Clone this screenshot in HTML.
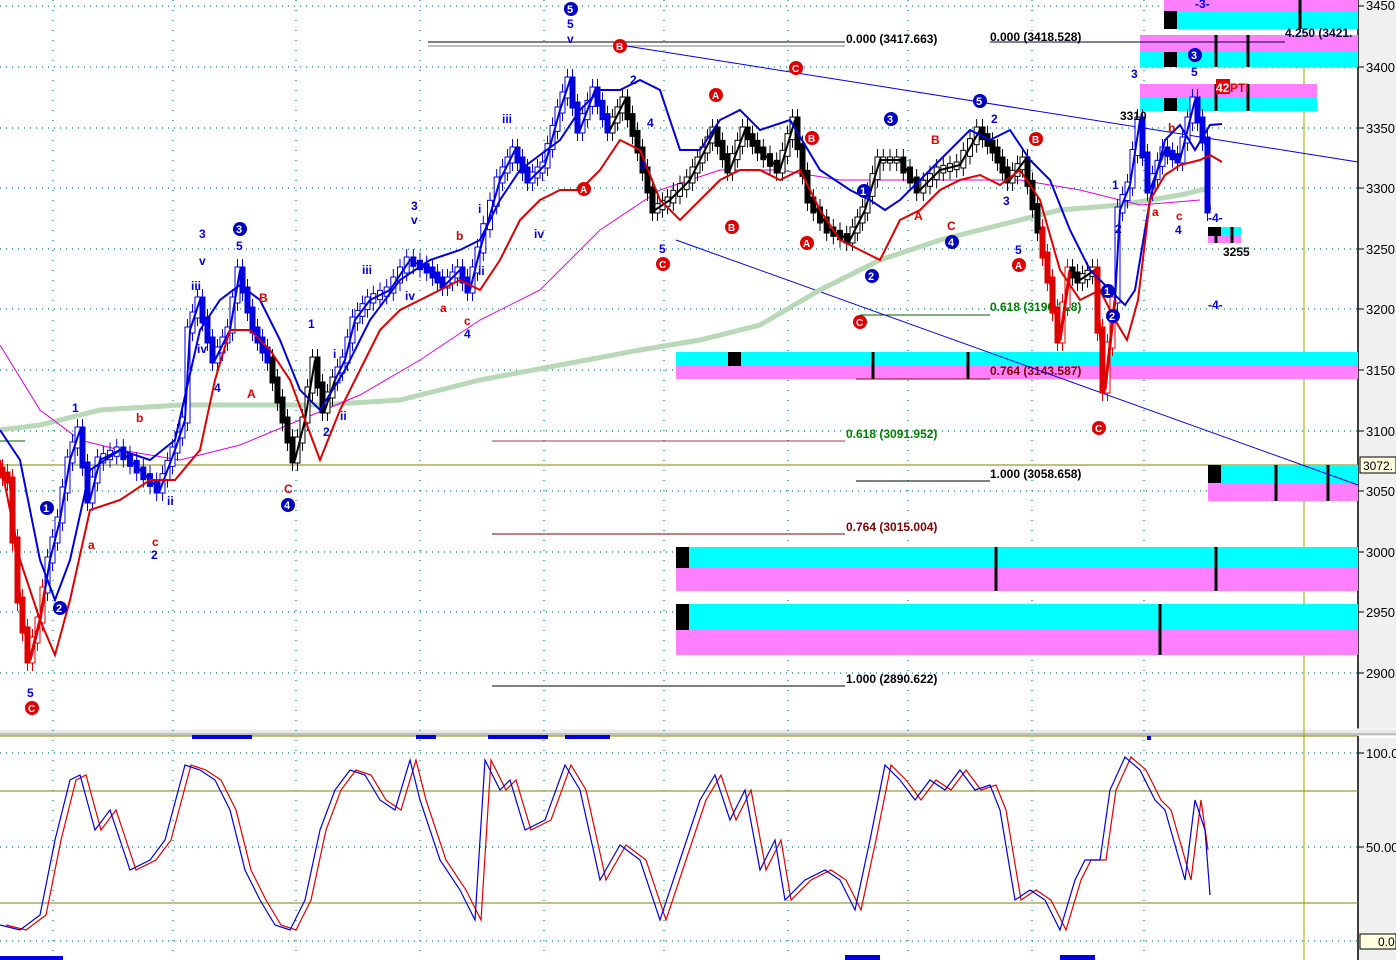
<!DOCTYPE html>
<html><head><meta charset="utf-8"><style>
html,body{margin:0;padding:0;background:#fff;}
svg{display:block;font-family:"Liberation Sans",sans-serif;}
.fib{font-size:12px;font-weight:bold;}
.ax{font-size:13px;font-family:"Liberation Sans",sans-serif;}
.wb{fill:#0000e0;font-size:12px;font-weight:bold;}
.wr{fill:#e00000;font-size:12px;font-weight:bold;}
</style></head><body>
<svg id="s" width="1396" height="960" viewBox="0 0 1396 960" xmlns="http://www.w3.org/2000/svg">
<rect width="1396" height="960" fill="#fff"/>
<rect x="1358" y="0" width="38" height="730" fill="#f0f0f0"/>
<rect x="1358" y="738" width="38" height="222" fill="#f0f0f0"/>
<line x1="1358" y1="0" x2="1358" y2="960" stroke="#000" stroke-width="1.5"/>
<rect x="0" y="729" width="1396" height="7" fill="#e8e8e8"/>
<line x1="0" y1="729" x2="1396" y2="729" stroke="#fff"/>
<line x1="0" y1="734" x2="1396" y2="734" stroke="#999"/>
<line x1="0" y1="736" x2="1358" y2="736" stroke="#808000"/>
<g stroke="#008080" stroke-dasharray="1,5" stroke-width="1.2">
<line x1="0" y1="6" x2="1358" y2="6"/><line x1="0" y1="67" x2="1358" y2="67"/><line x1="0" y1="128" x2="1358" y2="128"/>
<line x1="0" y1="188" x2="1358" y2="188"/><line x1="0" y1="249" x2="1358" y2="249"/><line x1="0" y1="309" x2="1358" y2="309"/>
<line x1="0" y1="370" x2="1358" y2="370"/><line x1="0" y1="431" x2="1358" y2="431"/><line x1="0" y1="491" x2="1358" y2="491"/>
<line x1="0" y1="552" x2="1358" y2="552"/><line x1="0" y1="612" x2="1358" y2="612"/><line x1="0" y1="673" x2="1358" y2="673"/>
<line x1="0" y1="753" x2="1358" y2="753"/><line x1="0" y1="847" x2="1358" y2="847"/><line x1="0" y1="941" x2="1358" y2="941"/>
</g>
<g stroke="#008080" stroke-dasharray="1,9" stroke-width="1.2">
<line x1="53" y1="0" x2="53" y2="960"/><line x1="173" y1="0" x2="173" y2="960"/><line x1="296" y1="0" x2="296" y2="960"/>
<line x1="420" y1="0" x2="420" y2="960"/><line x1="544" y1="0" x2="544" y2="960"/><line x1="664" y1="0" x2="664" y2="960"/>
<line x1="788" y1="0" x2="788" y2="960"/><line x1="908" y1="0" x2="908" y2="960"/><line x1="1032" y1="0" x2="1032" y2="960"/>
<line x1="1144" y1="0" x2="1144" y2="960"/>
</g>
<line x1="0" y1="465" x2="1358" y2="465" stroke="#808000"/>
<line x1="0" y1="791" x2="1358" y2="791" stroke="#808000"/>
<line x1="0" y1="903" x2="1358" y2="903" stroke="#808000"/>
<line x1="1304" y1="0" x2="1304" y2="960" stroke="#a0a000"/>
<g>
<rect x="676" y="352" width="682" height="14" fill="#00ffff"/><rect x="676" y="366" width="682" height="13" fill="#ff80ff"/>
<rect x="728" y="352" width="13" height="14" fill="#000"/>
<rect x="1208" y="465" width="150" height="18" fill="#00ffff"/><rect x="1208" y="483" width="150" height="18" fill="#ff80ff"/>
<rect x="1208" y="465" width="13" height="18" fill="#000"/>
<rect x="676" y="547" width="682" height="21" fill="#00ffff"/><rect x="676" y="568" width="682" height="23" fill="#ff80ff"/>
<rect x="676" y="547" width="13" height="21" fill="#000"/>
<rect x="676" y="604" width="682" height="26" fill="#00ffff"/><rect x="676" y="630" width="682" height="25" fill="#ff80ff"/>
<rect x="676" y="604" width="13" height="26" fill="#000"/>
<rect x="1164" y="0" width="194" height="11" fill="#ff80ff"/><rect x="1164" y="11" width="194" height="18" fill="#00ffff"/>
<rect x="1164" y="11" width="13" height="18" fill="#000"/>
<rect x="1140" y="35" width="218" height="17" fill="#ff80ff"/><rect x="1140" y="52" width="218" height="15" fill="#00ffff"/>
<rect x="1164" y="52" width="13" height="15" fill="#000"/>
<rect x="1140" y="84" width="177" height="14" fill="#ff80ff"/><rect x="1140" y="98" width="177" height="13" fill="#00ffff"/>
<rect x="1164" y="98" width="13" height="13" fill="#000"/>
<rect x="1208" y="227" width="33" height="9" fill="#00ffff"/><rect x="1208" y="236" width="33" height="7" fill="#ff80ff"/>
<rect x="1208" y="227" width="13" height="9" fill="#000"/>
<g stroke="#000" stroke-width="3">
<line x1="873" y1="352" x2="873" y2="379"/><line x1="968" y1="352" x2="968" y2="379"/>
<line x1="1276" y1="465" x2="1276" y2="501"/><line x1="1328" y1="465" x2="1328" y2="501"/>
<line x1="996" y1="547" x2="996" y2="591"/><line x1="1216" y1="547" x2="1216" y2="591"/>
<line x1="1160" y1="604" x2="1160" y2="655"/><line x1="1300" y1="0" x2="1300" y2="29"/>
<line x1="1216" y1="35" x2="1216" y2="67"/><line x1="1248" y1="35" x2="1248" y2="67"/>
<line x1="1216" y1="84" x2="1216" y2="111"/><line x1="1248" y1="84" x2="1248" y2="111"/>
<line x1="1216" y1="227" x2="1216" y2="243"/><line x1="1232" y1="227" x2="1232" y2="243"/>
</g>
</g>
<line x1="428" y1="42" x2="845" y2="42" stroke="#000"/>
<line x1="428" y1="46" x2="845" y2="46" stroke="#000" stroke-width="0.6"/>
<line x1="990" y1="42" x2="1285" y2="42" stroke="#000040"/>
<line x1="860" y1="315" x2="990" y2="315" stroke="#006000"/>
<line x1="856" y1="379" x2="990" y2="379" stroke="#800000"/>
<line x1="492" y1="441" x2="845" y2="441" stroke="#800000" stroke-width="0.7"/>
<line x1="0" y1="441" x2="25" y2="441" stroke="#006000"/>
<line x1="856" y1="481" x2="990" y2="481" stroke="#000"/>
<line x1="492" y1="534" x2="845" y2="534" stroke="#800000"/>
<line x1="492" y1="686" x2="845" y2="686" stroke="#000"/>
<text x="846" y="43" class="fib" fill="#000">0.000 (3417.663)</text>
<text x="990" y="41" class="fib" fill="#000">0.000 (3418.528)</text>
<text x="1285" y="37" class="fib" fill="#000040">4.250 (3421.</text>
<text x="990" y="311" class="fib" fill="#008000">0.618 (3196.128)</text>
<text x="990" y="375" class="fib" fill="#800000">0.764 (3143.587)</text>
<text x="846" y="438" class="fib" fill="#008000">0.618 (3091.952)</text>
<text x="990" y="478" class="fib" fill="#000">1.000 (3058.658)</text>
<text x="846" y="531" class="fib" fill="#800000">0.764 (3015.004)</text>
<text x="846" y="683" class="fib" fill="#000">1.000 (2890.622)</text>
<line x1="620" y1="45" x2="1358" y2="162" stroke="#0000e0"/>
<line x1="676" y1="240" x2="1358" y2="485" stroke="#0000e0"/>
<polyline fill="none" stroke="#b8d8b8" stroke-width="5" points="0,430 40,425 100,410 180,405 250,405 320,405 400,400 480,380 560,365 640,350 700,340 760,325 820,290 880,260 940,240 1000,225 1060,210 1120,205 1180,195 1210,188"/>
<polyline fill="none" stroke="#e000e0" stroke-width="1" points="0,345 40,410 80,440 120,450 180,460 240,445 300,420 360,395 420,360 480,320 540,290 600,230 660,190 720,170 780,170 840,180 900,180 960,180 1020,180 1080,190 1140,205 1200,200"/>
<g id="candles"></g>
<polyline fill="none" stroke="#e00000" stroke-width="3" points="0,470 10,480 20,600 30,660 40,620 45,590"/>
<polyline fill="none" stroke="#0000e0" stroke-width="2" points="45,590 50,560 60,520 70,460 80,430 90,500 100,460 120,450 140,470 160,490 175,450 185,420 190,330 200,300 215,360 230,330 240,270 255,330 270,360"/>
<polyline fill="none" stroke="#000" stroke-width="2" points="270,360 285,420 295,460 305,420 315,360 325,410 335,380"/>
<polyline fill="none" stroke="#0000e0" stroke-width="2" points="335,380 345,360 355,320 370,300 390,290 410,260 430,270 445,285 460,270 470,290 480,250 500,180 515,150 530,180 545,165 560,110 570,80 580,130 595,90 610,130"/>
<polyline fill="none" stroke="#000" stroke-width="2" points="610,130 625,100 640,150 655,210 670,200 690,180 705,150 715,130 730,170 745,130 760,150 780,170 795,120 810,200 830,230 850,240 865,210 880,160 900,160 920,190 940,170 960,165 980,130 995,150 1010,180 1025,160 1040,230"/>
<polyline fill="none" stroke="#e00000" stroke-width="3" points="1040,230 1050,280 1060,340 1070,270"/>
<polyline fill="none" stroke="#000" stroke-width="2" points="1070,270 1080,280 1095,270"/>
<polyline fill="none" stroke="#e00000" stroke-width="3" points="1095,270 1105,390 1115,300"/>
<polyline fill="none" stroke="#0000e0" stroke-width="2" points="1115,300 1120,210 1130,185 1140,120 1150,190 1165,150 1180,160 1195,100 1205,140 1210,210"/>
<polyline fill="none" stroke="#0000e0" stroke-width="2" points="0,430 20,460 40,560 55,600 70,560 90,470 120,450 150,460 175,440 200,330 220,300 240,285 260,300 280,340 300,390 320,410 345,370 370,320 400,280 430,260 460,250 480,240 500,200 520,170 540,155 560,140 580,110 600,90 620,90 640,80 660,90 680,150 700,150 720,120 740,110 760,130 790,120 820,170 850,190 870,200 885,210 900,200 940,160 970,130 990,140 1010,130 1030,160 1050,180 1070,230 1090,270 1110,290 1125,305 1135,290 1150,200 1165,140 1180,125 1195,150 1210,125 1222,124"/>
<polyline fill="none" stroke="#e00000" stroke-width="2" points="0,460 20,560 40,620 55,655 70,600 90,510 120,500 150,480 175,480 200,450 215,380 230,330 250,330 270,350 290,380 305,420 320,460 340,410 360,370 380,330 400,310 420,300 440,290 460,280 480,290 500,260 520,220 540,200 560,190 580,190 600,170 620,140 640,150 660,200 680,220 700,200 720,180 740,170 760,170 780,180 800,170 820,210 840,240 860,250 880,260 900,220 920,210 940,190 960,180 980,175 1000,185 1020,170 1040,200 1060,270 1080,300 1100,290 1115,320 1127,340 1138,300 1150,200 1165,175 1180,165 1200,160 1210,155 1222,162"/>
<g>
<circle cx="571" cy="9" r="7" fill="#0000c0"/><text x="567" y="13" fill="#fff" font-size="11" font-weight="bold">5</text>
<circle cx="240" cy="229" r="7" fill="#0000c0"/><text x="236" y="233" fill="#fff" font-size="11" font-weight="bold">3</text>
<circle cx="288" cy="505" r="7" fill="#0000c0"/><text x="284" y="509" fill="#fff" font-size="11" font-weight="bold">4</text>
<circle cx="47" cy="508" r="7" fill="#0000c0"/><text x="43" y="512" fill="#fff" font-size="11" font-weight="bold">1</text>
<circle cx="60" cy="608" r="7" fill="#0000c0"/><text x="56" y="612" fill="#fff" font-size="11" font-weight="bold">2</text>
<circle cx="891" cy="119" r="7" fill="#0000c0"/><text x="887" y="123" fill="#fff" font-size="11" font-weight="bold">3</text>
<circle cx="980" cy="101" r="7" fill="#0000c0"/><text x="976" y="105" fill="#fff" font-size="11" font-weight="bold">5</text>
<circle cx="864" cy="191" r="7" fill="#0000c0"/><text x="860" y="195" fill="#fff" font-size="11" font-weight="bold">1</text>
<circle cx="872" cy="276" r="7" fill="#0000c0"/><text x="868" y="280" fill="#fff" font-size="11" font-weight="bold">2</text>
<circle cx="952" cy="242" r="7" fill="#0000c0"/><text x="948" y="246" fill="#fff" font-size="11" font-weight="bold">4</text>
<circle cx="1108" cy="291" r="7" fill="#0000c0"/><text x="1104" y="295" fill="#fff" font-size="11" font-weight="bold">1</text>
<circle cx="1113" cy="316" r="7" fill="#0000c0"/><text x="1109" y="320" fill="#fff" font-size="11" font-weight="bold">2</text>
<circle cx="1195" cy="55" r="7" fill="#0000c0"/><text x="1191" y="59" fill="#fff" font-size="11" font-weight="bold">3</text>
<g fill="#e00000">
<circle cx="620" cy="46" r="7"/><circle cx="796" cy="68" r="7"/><circle cx="716" cy="95" r="7"/><circle cx="812" cy="138" r="7"/>
<circle cx="584" cy="189" r="7"/><circle cx="732" cy="227" r="7"/><circle cx="807" cy="243" r="7"/><circle cx="663" cy="264" r="7"/>
<circle cx="860" cy="322" r="7"/><circle cx="1036" cy="139" r="7"/><circle cx="1019" cy="265" r="7"/><circle cx="1099" cy="428" r="7"/>
<circle cx="32" cy="708" r="7"/>
</g>
<g fill="#fff" font-size="10" font-weight="bold">
<text x="616" y="50">B</text><text x="792" y="72">C</text><text x="712" y="99">A</text><text x="808" y="142">B</text>
<text x="580" y="193">A</text><text x="728" y="231">B</text><text x="803" y="247">A</text><text x="659" y="268">C</text>
<text x="856" y="326">C</text><text x="1032" y="143">B</text><text x="1015" y="269">A</text><text x="1095" y="432">C</text>
<text x="28" y="712">C</text>
</g>
<text class="wb" x="567" y="28">5</text><text class="wb" x="567" y="43">v</text>
<text class="wb" x="236" y="250">5</text><text class="wb" x="199" y="238">3</text><text class="wb" x="199" y="265">v</text>
<text class="wb" x="191" y="290">iii</text><text class="wb" x="197" y="353">iv</text><text class="wb" x="214" y="392">4</text>
<text class="wr" x="259" y="302">B</text><text class="wr" x="247" y="398">A</text><text class="wr" x="284" y="493">C</text>
<text class="wb" x="72" y="412">1</text><text class="wr" x="136" y="422">b</text><text class="wr" x="88" y="549">a</text>
<text class="wr" x="152" y="546">c</text><text class="wb" x="151" y="559">2</text><text class="wb" x="167" y="505">ii</text>
<text class="wb" x="27" y="697">5</text>
<text class="wb" x="308" y="328">1</text><text class="wb" x="333" y="358">i</text><text class="wb" x="323" y="436">2</text><text class="wb" x="340" y="420">ii</text>
<text class="wb" x="411" y="210">3</text><text class="wb" x="411" y="224">v</text><text class="wb" x="362" y="274">iii</text><text class="wb" x="405" y="300">iv</text>
<text class="wr" x="456" y="240">b</text><text class="wr" x="440" y="312">a</text><text class="wr" x="464" y="325">c</text><text class="wb" x="464" y="338">4</text>
<text class="wb" x="502" y="123">iii</text><text class="wb" x="534" y="238">iv</text><text class="wb" x="478" y="275">ii</text><text class="wb" x="478" y="213">i</text>
<text class="wb" x="630" y="84">2</text><text class="wb" x="647" y="127">4</text><text class="wb" x="639" y="169">3</text><text class="wb" x="659" y="253">5</text>
<text class="wr" x="931" y="144">B</text><text class="wr" x="914" y="220">A</text><text class="wr" x="947" y="230">C</text>
<text class="wb" x="991" y="123">2</text><text class="wb" x="1003" y="205">3</text><text class="wb" x="1015" y="254">5</text>
<text class="wb" x="1131" y="78">3</text><text class="wb" x="1191" y="76">5</text><text class="wb" x="1112" y="189">1</text><text class="wb" x="1115" y="233">2</text>
<text class="wb" x="1175" y="234">4</text><text class="wr" x="1152" y="216">a</text><text class="wr" x="1176" y="220">c</text><text class="wr" x="1168" y="132">b</text>
<text x="1120" y="120" font-size="12" font-weight="bold" fill="#000">3310</text>
<text x="1223" y="256" font-size="12" font-weight="bold" fill="#000">3255</text>
<text class="wb" x="1208" y="222">-4-</text><text class="wb" x="1208" y="309">-4-</text><text class="wb" x="1195" y="8">-3-</text>
<rect x="1216" y="79" width="14" height="15" fill="#e00000"/><text x="1216" y="92" font-size="12" font-weight="bold" fill="#fff">42</text>
<text x="1230" y="92" font-size="12" font-weight="bold" fill="#e00000">PTI</text>
</g>
<g class="ax" fill="#000">
<line x1="1358" y1="6" x2="1364" y2="6" stroke="#000"/><text x="1366" y="10">3450</text>
<line x1="1358" y1="67" x2="1364" y2="67" stroke="#000"/><text x="1366" y="72">3400</text>
<line x1="1358" y1="128" x2="1364" y2="128" stroke="#000"/><text x="1366" y="133">3350</text>
<line x1="1358" y1="188" x2="1364" y2="188" stroke="#000"/><text x="1366" y="193">3300</text>
<line x1="1358" y1="249" x2="1364" y2="249" stroke="#000"/><text x="1366" y="254">3250</text>
<line x1="1358" y1="309" x2="1364" y2="309" stroke="#000"/><text x="1366" y="314">3200</text>
<line x1="1358" y1="370" x2="1364" y2="370" stroke="#000"/><text x="1366" y="375">3150</text>
<line x1="1358" y1="431" x2="1364" y2="431" stroke="#000"/><text x="1366" y="436">3100</text>
<line x1="1358" y1="491" x2="1364" y2="491" stroke="#000"/><text x="1366" y="496">3050</text>
<line x1="1358" y1="552" x2="1364" y2="552" stroke="#000"/><text x="1366" y="557">3000</text>
<line x1="1358" y1="612" x2="1364" y2="612" stroke="#000"/><text x="1366" y="617">2950</text>
<line x1="1358" y1="673" x2="1364" y2="673" stroke="#000"/><text x="1366" y="678">2900</text>
<rect x="1360" y="457" width="36" height="16" fill="#ffffe0" stroke="#000"/><text x="1363" y="470" font-size="12">3072.</text>
<line x1="1358" y1="753" x2="1364" y2="753" stroke="#000"/><text x="1366" y="758">100.0</text>
<line x1="1358" y1="847" x2="1364" y2="847" stroke="#000"/><text x="1366" y="852">50.00</text>
<rect x="1360" y="934" width="36" height="15" fill="#ffffe0" stroke="#000"/><text x="1378" y="946" font-size="12">0.0</text>
</g>
<g fill="#0000e0">
<rect x="192" y="735" width="60" height="4"/><rect x="416" y="735" width="20" height="4"/><rect x="488" y="735" width="60" height="4"/>
<rect x="565" y="735" width="45" height="4"/><rect x="1147" y="736" width="4" height="4"/>
<rect x="0" y="956" width="63" height="4"/><rect x="845" y="955" width="35" height="5"/><rect x="1060" y="955" width="35" height="5"/>
</g>
<polyline fill="none" stroke="#e00000" stroke-width="1.2" transform="translate(6,0)" points="0,925 20,930 40,915 55,840 70,780 80,775 95,830 110,810 130,870 150,860 165,840 185,765 200,770 215,780 230,810 245,870 260,900 275,925 290,930 305,900 320,830 335,790 350,770 365,775 380,800 395,810 410,760 420,800 440,860 460,890 475,920 485,760 500,790 510,780 525,830 545,820 565,765 580,790 600,880 620,845 640,860 660,920 680,860 700,800 715,775 730,820 745,790 760,870 775,840 785,900 805,880 825,870 840,880 855,910 870,840 885,765 900,780 915,800 930,780 945,790 960,770 975,790 990,785 1000,810 1015,900 1030,890 1045,900 1060,930 1075,880 1085,860 1100,860 1110,790 1125,757 1140,770 1155,800 1165,810 1185,880 1195,800 1202,850"/>
<polyline fill="none" stroke="#0000e0" stroke-width="1.2" points="0,925 20,930 40,915 55,840 70,780 80,775 95,830 110,810 130,870 150,860 165,840 185,765 200,770 215,780 230,810 245,870 260,900 275,925 290,930 305,900 320,830 335,790 350,770 365,775 380,800 395,810 410,760 420,800 440,860 460,890 475,920 485,760 500,790 510,780 525,830 545,820 565,765 580,790 600,880 620,845 640,860 660,920 680,860 700,800 715,775 730,820 745,790 760,870 775,840 785,900 805,880 825,870 840,880 855,910 870,840 885,765 900,780 915,800 930,780 945,790 960,770 975,790 990,785 1000,810 1015,900 1030,890 1045,900 1060,930 1075,880 1085,860 1100,860 1110,790 1125,757 1140,770 1155,800 1165,810 1185,880 1195,800 1205,830 1210,895"/>
</svg>
<script>
(function(){
var P=[[0,470],[10,480],[20,600],[30,660],[40,620],[50,560],[60,520],[70,460],[80,430],[90,500],[100,460],[120,450],[140,470],[160,490],[175,450],[185,420],[190,330],[200,300],[215,360],[230,330],[240,270],[255,330],[270,360],[285,420],[295,460],[305,420],[315,360],[325,410],[335,380],[345,360],[355,320],[370,300],[390,290],[410,260],[430,270],[445,285],[460,270],[470,290],[480,250],[500,180],[515,150],[530,180],[545,165],[560,110],[570,80],[580,130],[595,90],[610,130],[625,100],[640,150],[655,210],[670,200],[690,180],[705,150],[715,130],[730,170],[745,130],[760,150],[780,170],[795,120],[810,200],[830,230],[850,240],[865,210],[880,160],[900,160],[920,190],[940,170],[960,165],[980,130],[995,150],[1010,180],[1025,160],[1040,230],[1050,280],[1060,340],[1070,270],[1080,280],[1095,270],[1105,390],[1115,300],[1120,210],[1130,185],[1140,120],[1150,190],[1165,150],[1180,160],[1195,100],[1205,140],[1210,210]];
function col(x){if(x<45||(x>1040&&x<1070)||(x>1095&&x<1115))return "#e00000";if((x>270&&x<335)||(x>610&&x<1115))return "#000";return "#0000e0";}
var g=document.getElementById("candles"),ns="http://www.w3.org/2000/svg",s="";
for(var i=1;i<P.length;i++){var a=P[i-1],b=P[i];var n=Math.max(1,Math.round((b[0]-a[0])/6));
for(var k=0;k<n;k++){var x=a[0]+(b[0]-a[0])*(k+0.5)/n;var y1=a[1]+(b[1]-a[1])*k/n,y2=a[1]+(b[1]-a[1])*(k+1)/n;
var t=Math.min(y1,y2)-3,h=Math.abs(y2-y1)+6,c=col(x),fill=(y2>y1)?c:"#fff";
s+='<line x1="'+x+'" y1="'+(t-8)+'" x2="'+x+'" y2="'+(t+h+8)+'" stroke="'+c+'" stroke-width="1"/>';
s+='<rect x="'+(x-2.5)+'" y="'+t+'" width="5" height="'+h+'" fill="'+fill+'" stroke="'+c+'" stroke-width="1"/>';}}
g.innerHTML=s;})();
</script>
</body></html>
